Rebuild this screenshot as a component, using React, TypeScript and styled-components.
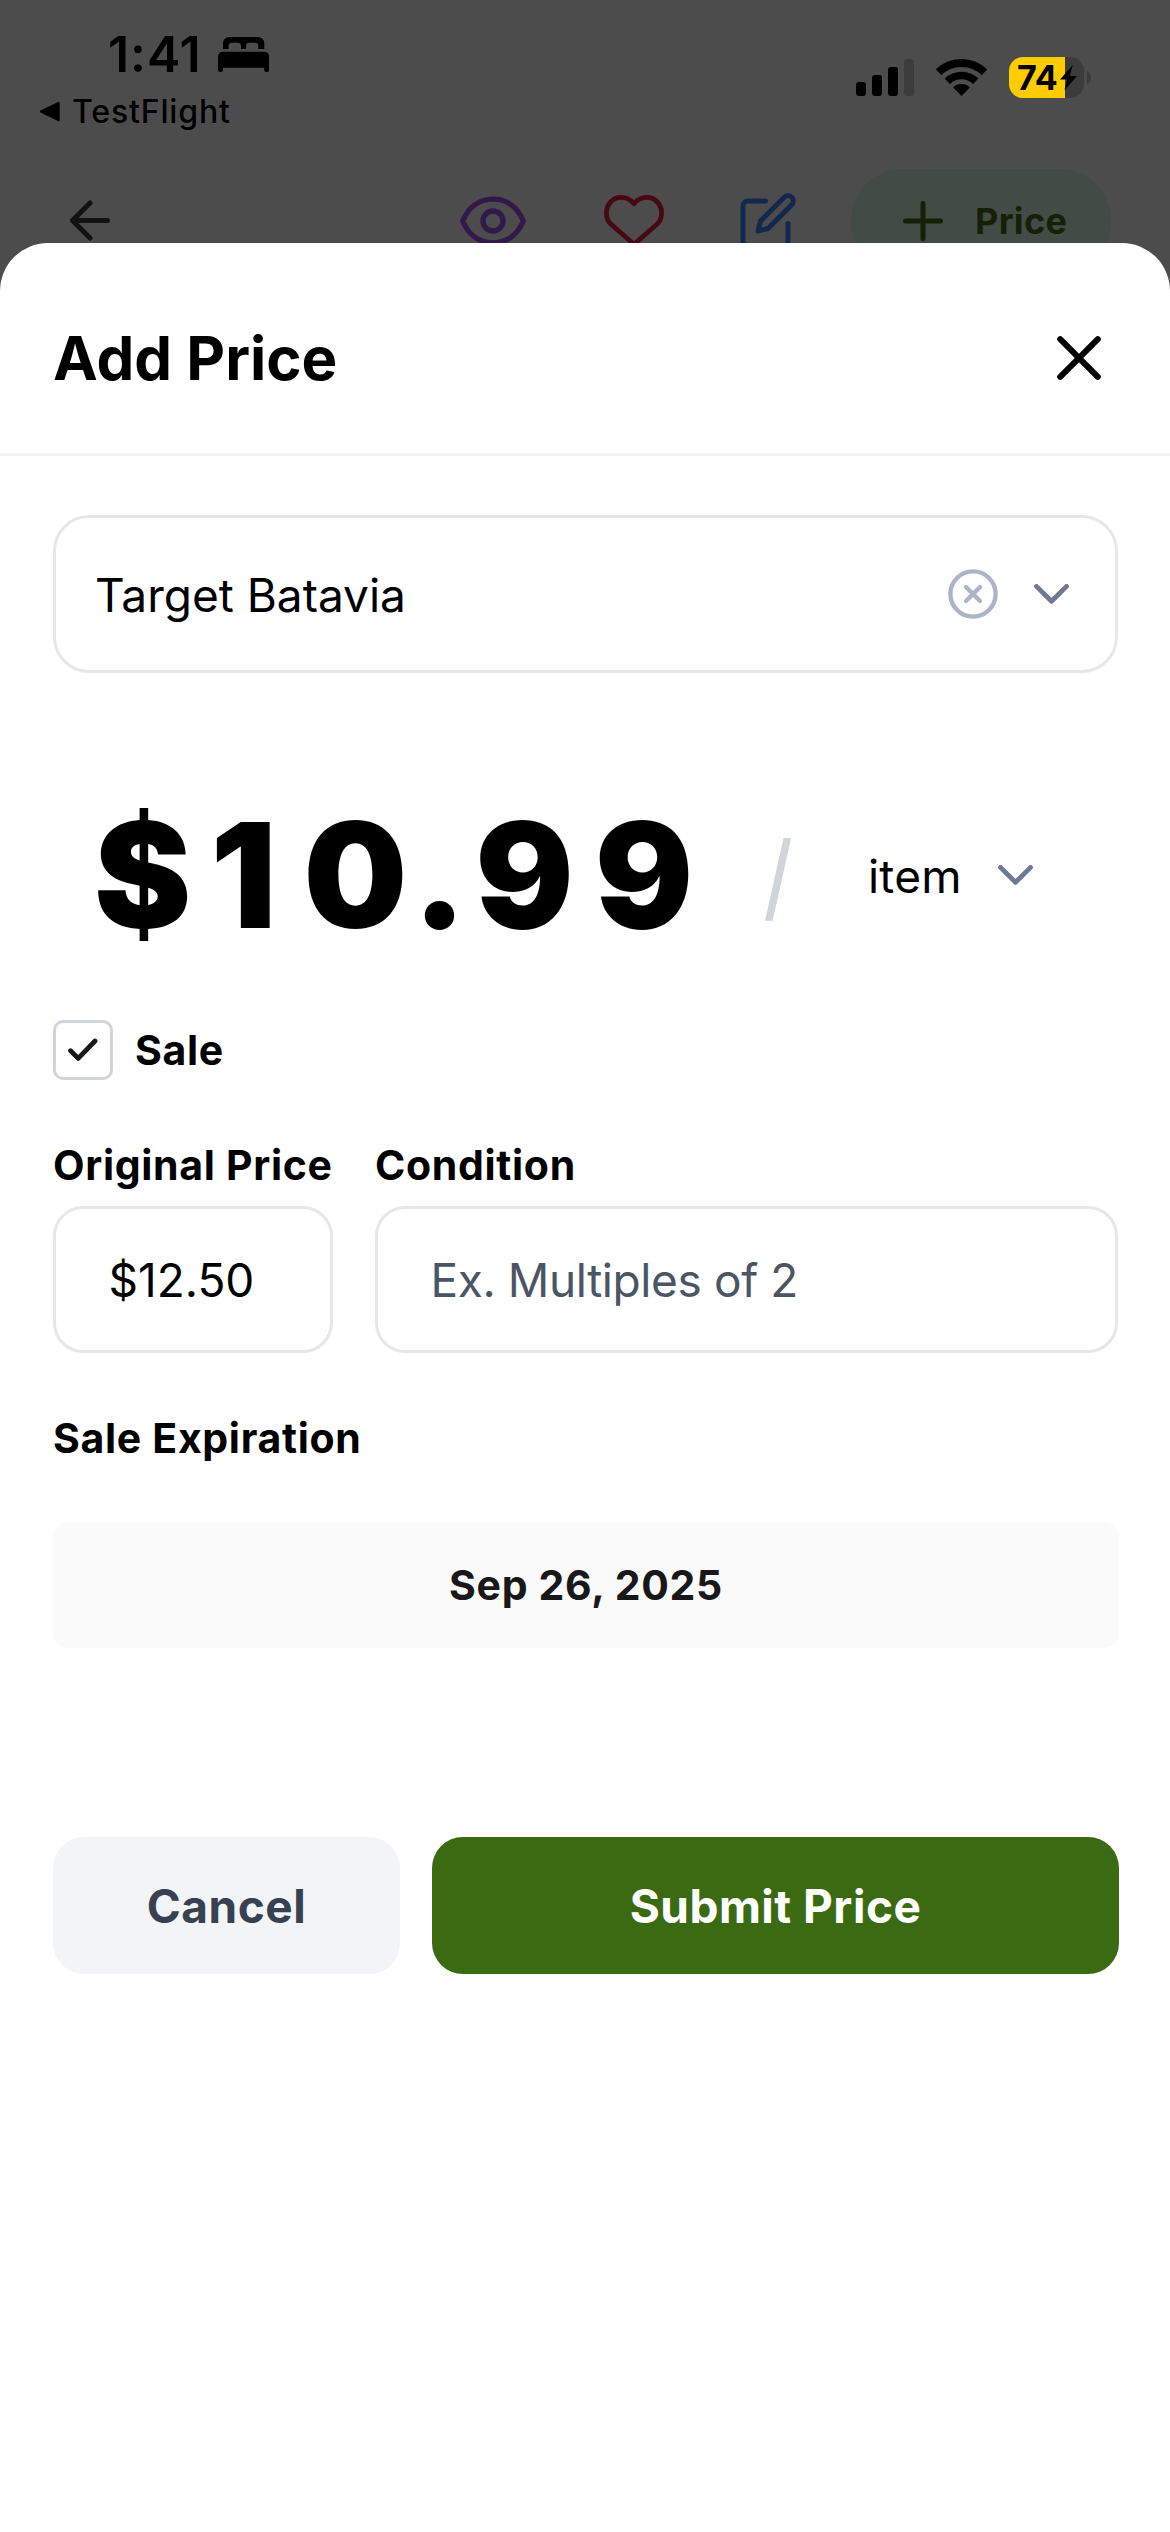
import React from "react";
import styled, { createGlobalStyle } from "styled-components";

const GlobalStyle = createGlobalStyle`
  *, *::before, *::after { box-sizing: border-box; }
  html, body { margin: 0; padding: 0; background: #4c4c4c; }
  button { border: 0; padding: 0; margin: 0; background: none; font: inherit; color: inherit; }
  svg { display: block; flex: none; }
`;

const Screen = styled.div`
  width: 1170px;
  height: 2532px;
  display: flex;
  flex-direction: column;
  overflow: hidden;
  background: #4c4c4c;
  color: #000;
  font-family: Inter, "Liberation Sans", sans-serif;
`;

/* ---------- status bar ---------- */

const StatusBar = styled.header`
  flex: none;
  height: 140px;
  display: flex;
  justify-content: space-between;
`;

const StatusLeft = styled.div`
  padding-top: 24px;
`;

const TimeRow = styled.div`
  height: 60px;
  padding-left: 108px;
  display: flex;
  align-items: center;
  gap: 16px;
  font-size: 50px;
  font-weight: 600;
  line-height: 60px;
  letter-spacing: 0.9px;
`;

const BackToApp = styled.div`
  height: 40px;
  margin-top: 7.5px;
  padding-left: 38.5px;
  display: flex;
  align-items: center;
  gap: 12.5px;
  font-size: 32px;
  font-weight: 500;
  line-height: 40px;
  letter-spacing: 0.85px;
`;

const StatusRight = styled.div`
  height: 41px;
  margin: 57px 79px 0 0;
  display: flex;
  align-items: center;
  gap: 22px;
`;

const Battery = styled.div`
  display: flex;
  align-items: center;
  gap: 3px;
`;

const BatteryShell = styled.div`
  width: 75px;
  height: 41px;
  padding: 1px 0 0 8px;
  border-radius: 14px;
  display: flex;
  align-items: center;
  gap: 2px;
  background: linear-gradient(to right, #ffcc00 56px, #3c3c3c 56px);
  font-size: 34px;
  font-weight: 700;
  line-height: 40px;
`;

const BatteryNub = styled.span`
  width: 4px;
  height: 13px;
  border-radius: 0 4px 4px 0 / 0 6.5px 6.5px 0;
  background: #3c3c3c;
`;

/* ---------- dimmed navigation ---------- */

const NavClip = styled.div`
  flex: none;
  height: 103px;
  padding-top: 29px;
  overflow: hidden;
`;

const NavBar = styled.nav`
  height: 103px;
  padding: 0 59px 0 70px;
  display: flex;
  align-items: center;
  justify-content: space-between;
`;

const NavActions = styled.div`
  display: flex;
  align-items: center;
`;

const NavButton = styled.button<{ $tint: string; $after?: number }>`
  margin-right: ${(p) => p.$after ?? 0}px;
  color: ${(p) => p.$tint};
`;

const PricePill = styled.button`
  width: 260px;
  height: 103px;
  padding-left: 52px;
  border-radius: 52px;
  display: flex;
  align-items: center;
  gap: 32px;
  background: #424b45;
  color: #152006;
`;

const PillLabel = styled.span`
  padding-top: 1px;
  font-size: 36px;
  font-weight: 700;
  line-height: 44px;
  letter-spacing: 0.3px;
`;

/* ---------- sheet ---------- */

const Sheet = styled.section`
  flex: 1;
  display: flex;
  flex-direction: column;
  border-radius: 48px 48px 0 0;
  background: #fff;
`;

const SheetHeader = styled.div`
  height: 213px;
  padding: 20px 69px 0 53px;
  border-bottom: 3px solid #f3f3f4;
  display: flex;
  align-items: center;
  justify-content: space-between;
`;

const Title = styled.h1`
  margin: 0;
  font-size: 60px;
  font-weight: 700;
  line-height: 72px;
`;

const Body = styled.div`
  padding: 59px 51px 0 53px;
  display: flex;
  flex-direction: column;
`;

const Select = styled.div`
  width: 1065px;
  height: 158px;
  padding: 0 46px 0 39px;
  border: 3px solid #e5e7eb;
  border-radius: 36px;
  display: flex;
  align-items: center;
  gap: 36px;
`;

const Value = styled.span`
  font-size: 46px;
  line-height: 56px;
`;

const SelectValue = styled(Value)`
  flex: 1;
  padding-top: 1px;
`;

const PriceRow = styled.div`
  height: 200px;
  margin-top: 102px;
  padding-left: 41px;
  display: flex;
  align-items: center;
`;

const Amount = styled.div`
  width: 600px;
  flex: none;
  white-space: nowrap;
  font-size: 146px;
  font-weight: 900;
  line-height: 180px;
  font-kerning: none;
`;

const Glyph = styled.span<{ $track: number }>`
  letter-spacing: ${(p) => p.$track}px;
`;

const Per = styled.span`
  width: 168px;
  flex: none;
  padding-top: 2px;
  text-align: center;
  transform: scaleX(0.83);
  font-size: 95px;
  font-weight: 500;
  line-height: 120px;
  color: #d1d5db;
`;

const UnitSelect = styled.div`
  width: 165px;
  margin-left: 6px;
  display: flex;
  align-items: center;
  justify-content: space-between;
  letter-spacing: 0.2px;
`;

const UnitValue = styled(Value)`
  padding-top: 1px;
`;

const labelType = `
  font-size: 41px;
  font-weight: 700;
  line-height: 50px;
  letter-spacing: 0.68px;
  white-space: nowrap;
`;

const CheckRow = styled.div`
  height: 60px;
  margin-top: 45px;
  display: flex;
  align-items: center;
  gap: 22px;
`;

const CheckBox = styled.span`
  width: 60px;
  height: 60px;
  border: 3px solid #d1d5db;
  border-radius: 10px;
  display: flex;
  align-items: center;
  justify-content: center;
`;

const Label = styled.span`
  ${labelType}
`;

const Fields = styled.div`
  width: 1065px;
  margin-top: 60px;
  display: grid;
  grid-template-columns: 280px 1fr;
  column-gap: 42px;
`;

const Field = styled.div`
  min-width: 0;
  display: flex;
  flex-direction: column;
  gap: 16px;
`;

const Input = styled.div<{ $placeholder?: boolean }>`
  height: 147px;
  padding: 1px 0 0 52.5px;
  border: 3px solid #e5e7eb;
  border-radius: 30px;
  display: flex;
  align-items: center;
  white-space: nowrap;
  color: ${(p) => (p.$placeholder ? "#4b5563" : "#000")};
  letter-spacing: ${(p) => (p.$placeholder ? "-0.4px" : "0")};
`;

const ExpirationLabel = styled.div`
  ${labelType}
  margin-top: 60px;
`;

const DateBox = styled.div`
  ${labelType}
  height: 126px;
  margin-top: 59px;
  border-radius: 15px;
  display: flex;
  align-items: center;
  justify-content: center;
  background: #fafafa;
  color: #18181b;
`;

const Actions = styled.div`
  margin-top: 189px;
  display: grid;
  grid-template-columns: 347px 1fr;
  column-gap: 32px;
`;

const ActionButton = styled.button<{ $primary?: boolean }>`
  height: 137px;
  border-radius: 31px;
  background: ${(p) => (p.$primary ? "#3a6b12" : "#f3f4f6")};
  color: ${(p) => (p.$primary ? "#fff" : "#374151")};
  font-size: 46px;
  font-weight: 700;
  line-height: 56px;
  letter-spacing: 0.5px;
`;

/* ---------- icons ---------- */

const BedIcon = () => (
  <svg width="51" height="35" viewBox="0 0 51 35">
    <path d="M5 12V7Q5 0 12 0H39.3Q46.3 0 46.3 7V12H40.3V9Q40.3 5.7 37 5.7H31.3Q28 5.7 28 9V12H23V9Q23 5.7 19.7 5.7H14Q10.7 5.7 10.7 9V12Z" />
    <path d="M0 20Q0 14.7 5.5 14.7H45.7Q51.2 14.7 51.2 20V33Q51.2 35 49.2 35H48.2Q46.2 35 46.2 33V30.7H5V33Q5 35 3 35H2Q0 35 0 33Z" />
  </svg>
);

const BackTriangle = () => (
  <svg width="21" height="21" viewBox="0 0 21 21">
    <path d="M2 10.5 19.5 2V19Z" stroke="#000" strokeWidth="2.4" strokeLinejoin="round" />
  </svg>
);

const SignalIcon = () => (
  <svg width="58" height="37" viewBox="0 0 58 37">
    <rect x="0" y="23" width="10" height="14" rx="3" />
    <rect x="16" y="16" width="10" height="21" rx="3" />
    <rect x="32" y="8" width="10" height="29" rx="3" />
    <rect x="48" y="0" width="10" height="37" rx="3" fill="#3c3c3c" />
  </svg>
);

const WifiIcon = () => (
  <svg width="51" height="37" viewBox="0 0 51 37">
    <path d="M2.6 13.3A33 33 0 0 1 48.4 13.3" fill="none" stroke="#000" strokeWidth="8" />
    <path d="M11.3 22.3A20.5 20.5 0 0 1 39.7 22.3" fill="none" stroke="#000" strokeWidth="7.5" />
    <path d="M25.5 37 17.2 28.4A12 12 0 0 1 33.8 28.4Z" />
  </svg>
);

const BoltIcon = () => (
  <svg width="17" height="26" viewBox="0 0 17 26">
    <path d="M12.7 0 0 14.5H7L4.5 25.3 17 11H9.8Z" />
  </svg>
);

const Stroked = styled.svg.attrs({
  fill: "none",
  stroke: "currentColor",
  strokeLinecap: "round",
  strokeLinejoin: "round",
})``;

const ArrowLeftIcon = () => (
  <Stroked width="40" height="41" viewBox="0 0 40 41" strokeWidth="5">
    <path d="M37.5 20.5H2.5M20 38 2.5 20.5 20 3" />
  </Stroked>
);

const EyeIcon = () => (
  <Stroked width="66" height="50" viewBox="0 0 66 50" strokeWidth="5.3">
    <path d="M2.7 25C8 12.5 18 3.2 33 3.2S58 12.5 63.3 25C58 37.5 48 46.8 33 46.8S8 37.5 2.7 25Z" />
    <circle cx="33" cy="25" r="10" />
  </Stroked>
);

const HeartIcon = () => (
  <Stroked width="60" height="52" viewBox="0 0 60 52" strokeWidth="4.8">
    <path d="M30 8.6C26.5 4.6 22 2.4 17 2.4 8.8 2.4 2.4 9.4 2.4 18.2 2.4 23.5 4.3 26.8 7.6 29.8L30 49.3 52.4 29.8C55.7 26.8 57.6 23.5 57.6 18.2 57.6 9.4 51.2 2.4 43 2.4 38 2.4 33.5 4.6 30 8.6Z" />
  </Stroked>
);

const EditIcon = () => (
  <Stroked width="60" height="60" viewBox="0 0 24 24" strokeWidth="2">
    <path d="M11 4H4a2 2 0 0 0-2 2v14a2 2 0 0 0 2 2h14a2 2 0 0 0 2-2v-7" />
    <path d="M18.5 2.5a2.121 2.121 0 0 1 3 3L12 15l-4 1 1-4 9.5-9.5z" />
  </Stroked>
);

const PlusIcon = () => (
  <Stroked width="40" height="40" viewBox="0 0 40 40" strokeWidth="5">
    <path d="M20 2.5V37.5M2.5 20H37.5" />
  </Stroked>
);

const CloseIcon = () => (
  <Stroked width="44" height="44" viewBox="0 0 44 44" strokeWidth="6">
    <path d="M3.2 3.2 40.8 40.8M40.8 3.2 3.2 40.8" />
  </Stroked>
);

const ClearIcon = () => (
  <Stroked width="50" height="50" viewBox="0 0 50 50" strokeWidth="4.4" color="#aeb4c8">
    <circle cx="25" cy="25" r="22.6" />
    <path d="M18 18 32 32M32 18 18 32" />
  </Stroked>
);

const ChevronIcon = () => (
  <Stroked width="35" height="20" viewBox="0 0 35 20" strokeWidth="4.8" color="#707893">
    <path d="M2.5 2.4 17.5 17.3 32.5 2.4" />
  </Stroked>
);

const CheckIcon = () => (
  <Stroked width="30" height="24" viewBox="0 0 30 24" strokeWidth="4.8" color="#18181b">
    <path d="M2.6 12.8 10.2 20.4 27 3" />
  </Stroked>
);

/* ---------- page ---------- */

const amount = [
  { ch: "$", track: 19.3 },
  { ch: "1", track: 27 },
  { ch: "0", track: 5 },
  { ch: ".", track: 8.4 },
  { ch: "9", track: 21 },
  { ch: "9", track: 0 },
];

export default function App() {
  return (
    <Screen>
      <GlobalStyle />
      <StatusBar>
        <StatusLeft>
          <TimeRow>
            <span>1:41</span>
            <BedIcon />
          </TimeRow>
          <BackToApp>
            <BackTriangle />
            <span>TestFlight</span>
          </BackToApp>
        </StatusLeft>
        <StatusRight>
          <SignalIcon />
          <WifiIcon />
          <Battery>
            <BatteryShell>
              <span>74</span>
              <BoltIcon />
            </BatteryShell>
            <BatteryNub />
          </Battery>
        </StatusRight>
      </StatusBar>

      <NavClip>
        <NavBar>
          <NavButton $tint="#121212" aria-label="Back">
            <ArrowLeftIcon />
          </NavButton>
          <NavActions>
            <NavButton $tint="#33194a" $after={78} aria-label="Watch">
              <EyeIcon />
            </NavButton>
            <NavButton $tint="#470815" $after={73.5} aria-label="Favorite">
              <HeartIcon />
            </NavButton>
            <NavButton $tint="#12284f" $after={53.5} aria-label="Edit">
              <EditIcon />
            </NavButton>
            <PricePill>
              <PlusIcon />
              <PillLabel>Price</PillLabel>
            </PricePill>
          </NavActions>
        </NavBar>
      </NavClip>

      <Sheet>
        <SheetHeader>
          <Title>Add Price</Title>
          <button aria-label="Close">
            <CloseIcon />
          </button>
        </SheetHeader>
        <Body>
          <Select>
            <SelectValue>Target Batavia</SelectValue>
            <ClearIcon />
            <ChevronIcon />
          </Select>

          <PriceRow>
            <Amount>
              {amount.map((g, i) => (
                <Glyph key={i} $track={g.track}>{g.ch}</Glyph>
              ))}
            </Amount>
            <Per>/</Per>
            <UnitSelect>
              <UnitValue>item</UnitValue>
              <ChevronIcon />
            </UnitSelect>
          </PriceRow>

          <CheckRow>
            <CheckBox>
              <CheckIcon />
            </CheckBox>
            <Label>Sale</Label>
          </CheckRow>

          <Fields>
            <Field>
              <Label>Original Price</Label>
              <Input>
                <Value>$12.50</Value>
              </Input>
            </Field>
            <Field>
              <Label>Condition</Label>
              <Input $placeholder>
                <Value>Ex. Multiples of 2</Value>
              </Input>
            </Field>
          </Fields>

          <ExpirationLabel>Sale Expiration</ExpirationLabel>
          <DateBox>Sep 26, 2025</DateBox>

          <Actions>
            <ActionButton>Cancel</ActionButton>
            <ActionButton $primary>Submit Price</ActionButton>
          </Actions>
        </Body>
      </Sheet>
    </Screen>
  );
}
